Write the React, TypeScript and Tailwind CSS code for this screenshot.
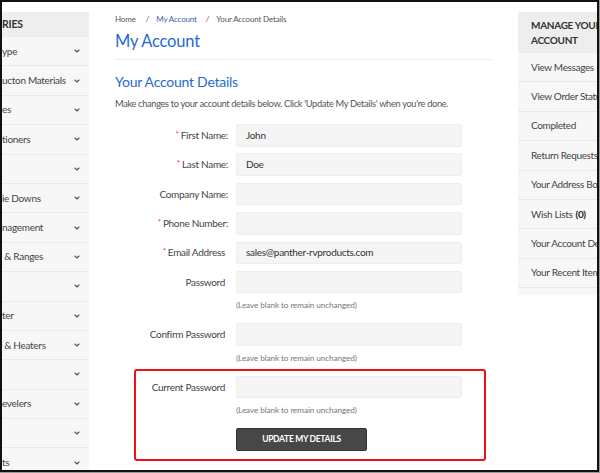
import { ChevronDown } from "lucide-react";

const leftItems = [
  "ype",
  "ucton Materials",
  "es",
  "tioners",
  "",
  "ie Downs",
  "nagement",
  "\u00a0& Ranges",
  "",
  "ter",
  "\u00a0& Heaters",
  "",
  "evelers",
  "",
  "ts",
];

const rightItems: { label: string; bold?: string }[] = [
  { label: "View Messages", bold: "(0)" },
  { label: "View Order Status" },
  { label: "Completed" },
  { label: "Return Requests" },
  { label: "Your Address Book" },
  { label: "Wish Lists", bold: "(0)" },
  { label: "Your Account Details" },
  { label: "Your Recent Items" },
];

const fields = [
  { label: "First Name:", required: true, value: "John" },
  { label: "Last Name:", required: true, value: "Doe" },
  { label: "Company Name:", value: "" },
  { label: "Phone Number:", required: true, value: "" },
  { label: "Email Address", required: true, value: "sales@panther-rvproducts.com", noColon: true },
  { label: "Password", value: "", noColon: true },
];

function FieldRow({
  label,
  required,
  value,
  noColon,
}: {
  label: string;
  required?: boolean;
  value: string;
  noColon?: boolean;
}) {
  return (
    <div className="flex items-center">
      <div className={`w-[113px] text-right text-[10px] tracking-[-0.3px] text-[#444] ${noColon ? "pr-[3px]" : ""}`}>
        {required && <span className="text-[#e33] text-[8px] align-top mr-[2px]">*</span>}
        {label}
      </div>
      <div className="ml-[8px] w-[226px] h-[22.5px] bg-[#f5f5f5] border border-[#ededed] rounded-[2px] flex items-center pl-[9px] text-[10px] tracking-[-0.3px] text-[#333]">
        {value}
      </div>
    </div>
  );
}

function Hint() {
  return (
    <div className="ml-[121px] mt-[6px] h-[12px] leading-[12px] text-[8.2px] tracking-[-0.1px] text-[#777]">
      (Leave blank to remain unchanged)
    </div>
  );
}

export default function App() {
  return (
    <div className="w-[600px] h-[473px] bg-[#9a9a9a]" style={{ fontFamily: "Lato, 'Liberation Sans', sans-serif" }}>
      <div className="w-[599px] h-[472px] border-2 border-[#111] bg-white overflow-hidden flex relative">
        {/* Left categories */}
        <div className="w-[87px] shrink-0 mt-[10px] bg-[#f7f7f7] flex flex-col">
          <div className="h-[25px] shrink-0 bg-[#eeeeee] flex items-center text-[10.5px] tracking-[-0.2px] font-bold text-[#333]">RIES</div>
          {leftItems.map((t, i) => (
            <div
              key={i}
              className="h-[29.4px] shrink-0 border-b border-[#e9e9e9] flex items-center justify-between pr-[8px] text-[10px] tracking-[-0.3px] text-[#444] whitespace-nowrap"
            >
              <span>{t}</span>
              <ChevronDown size={8} strokeWidth={3.5} className="text-[#555] shrink-0" />
            </div>
          ))}
        </div>

        {/* Main */}
        <div className="ml-[26px] w-[377px] shrink-0 pt-[10px]">
          <div className="flex items-center gap-[7px] text-[8px] tracking-[-0.15px] text-[#555] h-[14px]">
            <span>Home</span>
            <span className="ml-[3px]">/</span>
            <span className="text-[#3a64a8]">My Account</span>
            <span className="ml-[2px]">/</span>
            <span>Your Account Details</span>
          </div>
          <h1 className="mt-[4px] text-[16.5px] tracking-[-0.2px] leading-[22px] text-[#1f6bd0]">My Account</h1>
          <div className="mt-[7px] h-px bg-[#eeeeee]" />
          <h2 className="mt-[12px] text-[14px] tracking-[-0.25px] leading-[20px] text-[#1f6bd0]">Your Account Details</h2>
          <p className="mt-[5px] text-[9.3px] tracking-[-0.35px] leading-[14px] text-[#555] whitespace-nowrap">
            Make changes to your account details below. Click 'Update My Details' when you're done.
          </p>

          <div className="mt-[13px] relative">
            <div className="flex flex-col gap-[6.9px]">
              {fields.map((f) => (
                <FieldRow key={f.label} {...f} />
              ))}
            </div>
            <Hint />
            <div className="mt-[12px]">
              <FieldRow label="Confirm Password" value="" noColon />
            </div>
            <Hint />
            <div className="mt-[12px]">
              <FieldRow label="Current Password" value="" noColon />
            </div>
            <Hint />
            <div className="ml-[121px] mt-[12px] w-[131px] h-[22.5px] bg-[#474747] border border-[#333] rounded-[2px] flex items-center justify-center text-white text-[8.5px] font-bold tracking-[-0.3px]">
              UPDATE MY DETAILS
            </div>
            {/* annotation box */}
            <div className="absolute left-[19px] top-[245px] w-[352px] h-[92px] border-2 border-[#ee1111] rounded-[3px] pointer-events-none" />
          </div>
        </div>

        {/* Right account menu */}
        <div className="ml-[26px] w-[140px] shrink-0 mt-[10px] self-start bg-[#f7f7f7] pb-[7px]">
          <div className="h-[41px] bg-[#eeeeee] flex flex-col justify-center pl-[13px] text-[10px] tracking-[-0.3px] leading-[15px] font-bold text-[#333] whitespace-nowrap">
            <span>MANAGE YOUR</span>
            <span>ACCOUNT</span>
          </div>
          {rightItems.map((it) => (
            <div
              key={it.label}
              className="h-[29.4px] border-b border-[#e9e9e9] flex items-center pl-[13px] text-[10px] tracking-[-0.35px] text-[#444] whitespace-nowrap"
            >
              {it.label}
              {it.bold && <span className="ml-[3px] font-bold text-[#222]">{it.bold}</span>}
            </div>
          ))}
        </div>
      </div>
    </div>
  );
}
